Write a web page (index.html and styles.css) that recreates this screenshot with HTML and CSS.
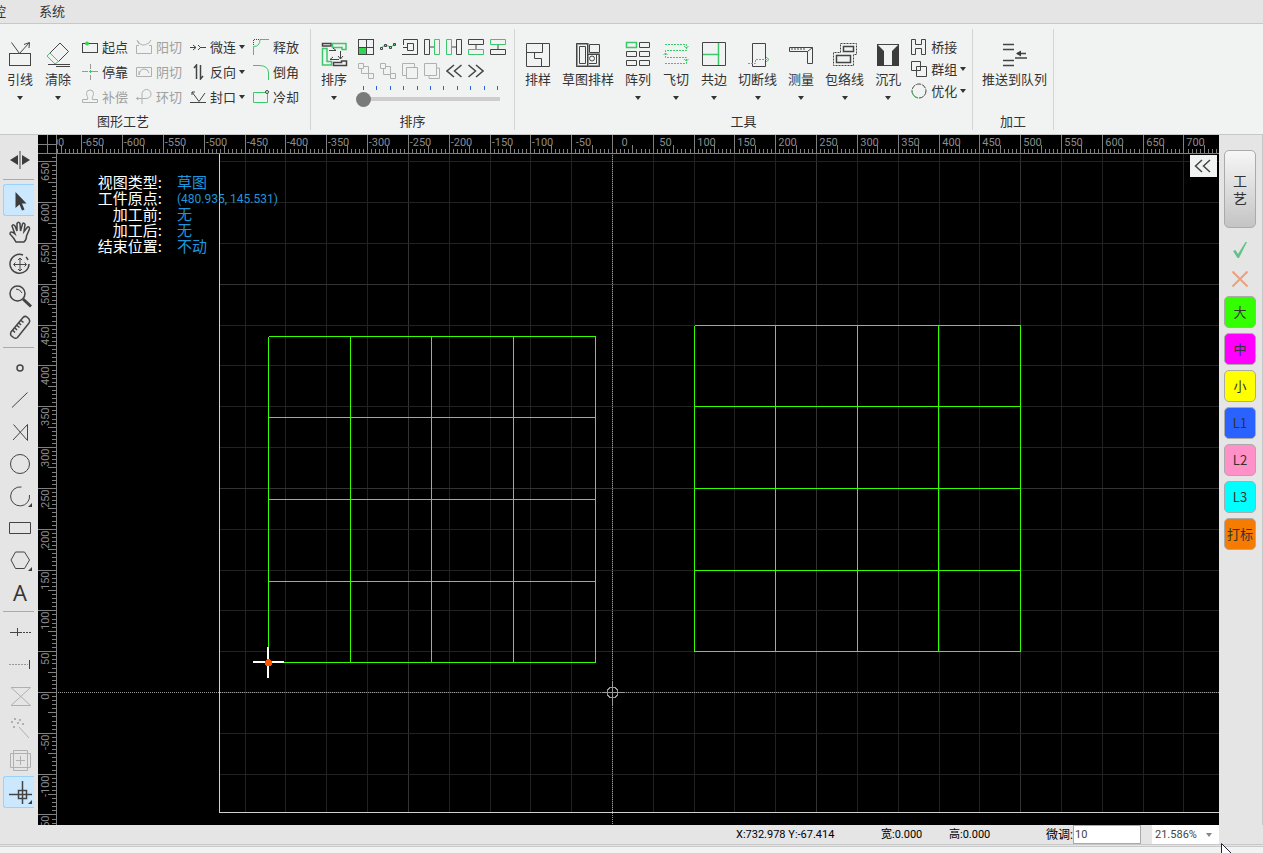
FILE: index.html
```
<!DOCTYPE html>
<html lang="zh-CN">
  <head>
    <meta charset="UTF-8" />
    <meta name="viewport" content="width=device-width, initial-scale=1.0" />
    <title>排样</title>
    <link rel="stylesheet" href="styles.css">
  </head>
  <body>
    <nav class="menu">
      <a href="#">监控</a>
      <a href="#">系统</a>
    </nav>

    <header class="ribbon">
      <section class="group first">
        <div class="tools">
          <button class="tool">
            <svg width="28" height="28"><rect x="3.5" y="13.5" width="21" height="12"/><path d="M5.5 2.5L13.5 13.5L23 3M18 4.5L23.5 2.5L23 8"/></svg>
            引线<i class="caret"></i>
          </button>
          <button class="tool">
            <svg width="28" height="28"><path d="M6 13L16 3L24.5 11.5L14.5 21.5"/><path class="g" d="M6 13L3 16L11 24L14.5 21.5Z"/><path d="M4 24.5H26M12 26.5H26"/></svg>
            清除<i class="caret"></i>
          </button>
          <div class="columns">
            <div class="column">
              <button class="small"><svg width="16" height="16"><rect x="0.5" y="4.5" width="15" height="9"/><circle class="gf" cx="5" cy="4.5" r="2"/></svg>起点</button>
              <button class="small"><svg width="16" height="16"><path class="soft" d="M0 7.5H6M10 7.5H16M8.500 0V5M8.500 11V16"/><path class="g" d="M7 7.500H10M8.500 6V9"/></svg>停靠</button>
              <button class="small" disabled><svg width="16" height="16"><path d="M.5 13.500V10.500H5.500C6.500 8 4.500 7 4.500 4.500A3.500 3.500 0 0 1 11.500 4.500C11.500 7 9.500 8 10.500 10.500H15.500V13.500Z"/></svg>补偿</button>
            </div>
            <div class="column">
              <button class="small" disabled><svg width="16" height="16"><path d="M.5 6.500V14.500H15.500V6.500H13M.5 6.500H3M2 2Q5 9 13 4L15 1M3 5L1 1"/></svg>阳切</button>
              <button class="small" disabled><svg width="16" height="16"><path d="M.5 3.500H15.500V12.500H.5ZM3 11Q4 5 8 5Q12 5 13 9M3 7L3 11"/></svg>阴切</button>
              <button class="small" disabled><svg width="16" height="16"><path d="M0 9.500H10Q15 9 15 5A4.500 4.500 0 0 0 6 5V15M1 8L3 9.500L1 11"/></svg>环切</button>
            </div>
            <div class="column">
              <button class="small"><svg width="16" height="16"><path d="M0 8.500H6M10 8.500H16M3 6L6 8.500L3 11M8 6L10.500 8.500L8 11"/></svg>微连<i class="caret"></i></button>
              <button class="small"><svg width="16" height="16"><path d="M6.500 15V1L4 4M10.500 1V15L13 12" stroke-width="1.500"/></svg>反向<i class="caret"></i></button>
              <button class="small"><svg width="16" height="16"><path d="M0 13.500H16M2 3L9 12.500L15 4M2 6V3H5"/></svg>封口<i class="caret"></i></button>
            </div>
            <div class="column">
              <button class="small"><svg width="16" height="16"><path class="g" d="M.5 16V7.500Q7 7.500 7 .5H16"/><path stroke-dasharray="1 1" d="M.5 6V.5H6"/></svg>释放</button>
              <button class="small"><svg width="16" height="16"><path class="g" d="M0 1.500H6Q15.500 1.500 15.500 9V16"/></svg>倒角</button>
              <button class="small"><svg width="16" height="16"><path class="g" d="M13 3.500H.5V13.500H14.500V5"/><circle cx="14" cy="3" r="1.500"/></svg>冷却</button>
            </div>
          </div>
        </div>
        <h2>图形工艺</h2>
      </section>

      <section class="group sort">
        <div class="tools">
          <button class="tool">
            <svg width="28" height="28"><path stroke-width="1.500" d="M2.500 3.500H11V6H2.500ZM21.500 21H26.500V25.500H13.500V22.500H21.500Z"/><path class="g" stroke-width="1.500" d="M12.500 3.500H26V9.500H22V7.500H12.500ZM2.500 8.500H7V21.500H11.500V25H2.500Z"/><path d="M9 10.500H16L13 8M20.500 11V19L18 16M20.500 19L23 16M19 19.500H10L13 17"/></svg>
            排序<i class="caret"></i>
          </button>
          <div class="sort-panel">
            <div class="icons">
              <button title="网格排序"><svg width="16" height="16"><rect x=".5" y=".5" width="15" height="15"/><rect class="gf" x="1" y="8" width="7" height="7"/><path d="M8.500 0V16M0 8.500H16"/></svg></button>
              <button title="最短路径"><svg width="16" height="16"><path class="g" d="M1 9L5 6L11 8L15 5"/><path d="M.5 8.500H2.500V10.500H.5ZM4.500 5.500H6.500V7.500H4.500ZM9.500 7.500H11.500V9.500H9.500ZM13.500 4.500H15.500V6.500H13.500Z"/></svg></button>
              <button title="由内到外"><svg width="16" height="16"><path d="M0 15.500H15.500V.5H1.500V6M1 8.500H5M5 4.500H11.500V11.500H5.500V4.500"/></svg></button>
              <button title="从左到右"><svg width="16" height="16"><path d="M.5 .5H5.500V15.500H.5ZM5 8H10"/><path class="g" d="M10.500 .5H15.500V15.500H10.500Z"/></svg></button>
              <button title="从右到左"><svg width="16" height="16"><path class="g" d="M.5 .5H5.500V15.500H.5Z"/><path d="M10.500 .5H15.500V15.500H10.500ZM6 8H11"/></svg></button>
              <button title="从上到下"><svg width="16" height="16"><path d="M.5 .5H15.500V5.500H.5ZM8 6V10"/><path class="g" d="M.5 10.500H15.500V15.500H.5Z"/></svg></button>
              <button title="从下到上"><svg width="16" height="16"><path class="g" d="M.5 .5H15.500V5.500H.5Z"/><path d="M.5 10.500H15.500V15.500H.5ZM8 6V10"/></svg></button>
              <button title="上移" disabled><svg width="16" height="16"><path d="M.5 .5H5.500V5.500H.5ZM3.500 6V10.500H10.500V3.500H6M10.500 10.500H15.500V15.500H10.500Z"/></svg></button>
              <button title="下移" disabled><svg width="16" height="16"><path d="M.5 .5H5.500V5.500H.5ZM6 3.500H10.500V10M3.500 6V11.500H10M10.500 10.500H15.500V15.500H10.500Z"/></svg></button>
              <button title="置顶" disabled><svg width="16" height="16"><path d="M4 12.500H.5V.5H12.500V4M4.500 4.500H15.500V15.500H4.500Z"/></svg></button>
              <button title="置底" disabled><svg width="16" height="16"><path d="M.5 .5H12.500V12.500H.5ZM13 5H15.500V15.500H5V13"/></svg></button>
              <button title="上一个"><svg width="16" height="16"><path stroke-width="1.500" d="M8 2L1 8L8 14M15.500 2L8.500 8L15.500 14"/></svg></button>
              <button title="下一个"><svg width="16" height="16"><path stroke-width="1.500" d="M.5 2L7.500 8L.5 14M8 2L15 8L8 14"/></svg></button>
            </div>
            <div class="ticks"><i></i><i></i><i></i><i></i><i></i><i></i><i></i><i></i><i></i><i></i><i></i></div>
            <input class="slider" type="range" min="0" max="10" value="0" aria-label="排序进度">
          </div>
        </div>
        <h2>排序</h2>
      </section>

      <section class="group kit">
        <div class="tools">
          <button class="tool"><svg width="28" height="28"><path d="M2.500 3.500H25.500V26.500H2.500ZM2 12.500H18.500V4M10.500 13V18.500H17.500V26"/></svg>排样</button>
          <button class="tool long"><svg width="28" height="28"><path class="soft" stroke-width="2" d="M3 4H14V26H3ZM14 14H25V26H14"/><path d="M2.500 3.500H13.500V26.500H2.500ZM13.500 14.500H25.500V26.500H13.500M5.500 6.500H11.500V23.500H5.500ZM15.500 4.500H25.500V12.500H15.500Z"/><circle cx="18" cy="18.500" r="2.500"/><path d="M15 23.500H22.500V15"/></svg>草图排样</button>
          <button class="tool"><svg width="28" height="28"><path class="g" d="M2.500 2.500H12.500V7.500H2.500Z" stroke-width="1.500"/><path d="M15.500 2.500H25.500V7.500H15.500ZM2.500 11.500H12.500V16.500H2.500ZM15.500 11.500H25.500V16.500H15.500ZM2.500 20.500H12.500V25.500H2.500ZM15.500 20.500H25.500V25.500H15.500Z"/></svg>阵列<i class="caret"></i></button>
          <button class="tool"><svg width="28" height="28"><g class="g"><path stroke-dasharray="2 1" d="M3 4.500H24.500V10.500H3.500V17.500H24.500V23.500H3"/><path d="M22 6L24.500 8L26.500 6M1.500 15L3.500 13L5.500 15M22 19L24.500 21L26.500 19"/></g></svg>飞切<i class="caret"></i></button>
          <button class="tool"><svg width="28" height="28"><path d="M2.500 2.500H25.500V25.500H2.500Z"/><path class="g" stroke-width="1.500" d="M18.500 3V25M3 14.500H18"/></svg>共边<i class="caret"></i></button>
          <button class="tool long"><svg width="28" height="28"><path d="M8.500 3.500H21.500V26.500H8.500Z"/><path class="g" stroke-dasharray="2 1" d="M4 23.500H11.500V19.500H24"/><path class="g" d="M22 17L25 19.500L22 22"/></svg>切断线<i class="caret"></i></button>
          <button class="tool"><svg width="28" height="28"><path d="M2.500 7.500H25.500V23.500H20.500V11.500H2.500ZM25.500 7.500L20.500 11.500M5 8V10M8 8V10M11 8V10M14 8V10M17 8V10"/></svg>测量<i class="caret"></i></button>
          <button class="tool long"><svg width="28" height="28"><path stroke-dasharray="2 1" d="M9.500 12.500V3.500H25.500V14.500H22.500V25.500H2.500V12.500H9.500"/><path stroke-width="1.500" d="M12.500 6.500H22.500V11.500H12.500ZM5.500 15.500H19.500V22.500H5.500Z"/></svg>包络线<i class="caret"></i></button>
          <button class="tool"><svg width="28" height="28"><path class="solid" d="M3 4L10 11V26H3ZM25 4L18 11V26H25Z"/><path d="M3 4.500H25M10 25.500H18"/></svg>沉孔<i class="caret"></i></button>
          <div class="column tight">
            <button class="small"><svg width="16" height="16"><path d="M.5 .5H4.500V5.500H10.500V.5H14.500V15.500H10.500V9.500H4.500V15.500H.5Z"/></svg>桥接</button>
            <button class="small"><svg width="16" height="16"><path d="M.5 .5H9.500V9.500H.5ZM5.500 5.500H15.500V15.500H5.500Z"/></svg>群组<i class="caret"></i></button>
            <button class="small"><svg width="16" height="16"><circle cx="8" cy="8" r="7" stroke-dasharray="5 1"/><path class="g" d="M1 9Q2 14 7 15"/></svg>优化<i class="caret"></i></button>
          </div>
        </div>
        <h2>工具</h2>
      </section>

      <section class="group queue">
        <div class="tools">
          <button class="tool long"><svg width="28" height="28"><path stroke-width="1.500" d="M2 4.500H13M2 9.500H13M2 20.500H13M2 25.500H13M14 18H26M25 13.500H16"/><path class="solid" d="M15 13.500L20 10.500V16.500Z"/></svg>推送到队列</button>
        </div>
        <h2>加工</h2>
      </section>
    </header>

    <main>
      <aside class="left-bar">
        <button title="镜像"><svg width="32" height="32"><path class="solid" d="M7 16L15 11V21ZM27 16L19 11V21Z"/><path d="M17 7V25"/></svg></button>
        <hr>
        <button title="选择" class="active"><svg width="32" height="32"><path class="solid" d="M12.500 8V24L16.500 20.500L19 26.500L21.500 25.500L19 19.500H23.500Z"/></svg></button>
        <button title="平移"><svg width="32" height="32"><path stroke-width="1.500" d="M13 26Q11 22 7 18Q7 15 10 16.500L12 18L9 10Q10 7.500 12 10L14 15L14 7.500Q15.500 5 17 7.500L17.500 15L19.500 8Q21 6 22 8.500L21 15.500L24.500 11Q26.500 10 26.500 13L23.500 20Q23.500 24 21 26Z"/></svg></button>
        <button title="旋转"><svg width="32" height="32"><path stroke-width="1.500" d="M20 7A9.500 9.500 0 1 0 26 16M25 12A9.500 9.500 0 0 0 23 9"/><path d="M17 10.500V22M11 16.500H23M15 12L17 10L19 12M15 21L17 23L19 21M12.500 14.500L10.500 16.500L12.500 18.500M21.500 14.500L23.500 16.500L21.500 18.500"/></svg></button>
        <button title="缩放"><svg width="32" height="32"><circle cx="14.500" cy="13.500" r="7.500" stroke-width="1.500"/><path d="M13 9Q17 9 19 13"/><path stroke-width="3" d="M20 19L28 26.500"/></svg></button>
        <button title="测量"><svg width="32" height="32"><path stroke-width="1.500" d="M20 5.500Q22 3.500 24 5L26 7Q27.500 9 26 11L14.500 25.500Q12.500 27 10.500 25.500L8 23.500Q7 22 8 20ZM18 8.500L20.500 10.500M16 11L18 13M14 13.500L16.500 15.500M12 16L14 18M10 18.500L12 20.500"/></svg></button>
        <hr>
        <button title="点"><svg width="32" height="32"><circle cx="17" cy="16" r="3" stroke-width="1.500"/></svg></button>
        <button title="直线"><svg width="32" height="32"><path d="M9 23.500L24.500 8.500"/></svg></button>
        <button title="折线"><svg width="32" height="32"><path d="M10.500 8.500L24.500 24.500V8.500L10 24"/></svg></button>
        <button title="圆"><svg width="32" height="32"><circle cx="17" cy="16" r="9.500"/></svg></button>
        <button title="圆弧"><svg width="32" height="32"><path d="M18.500 7A9.500 9.500 0 1 0 26.500 15"/><path class="solid" d="M29 23V27H25Z"/></svg></button>
        <button title="矩形"><svg width="32" height="32"><path d="M6.500 10.500H27.500V21.500H6.500Z"/></svg></button>
        <button title="多边形"><svg width="32" height="32"><path d="M8 16L12.500 8H21.500L26.500 16L21.500 24.500H12.500Z"/><path class="solid" d="M29 23V27H25Z"/></svg></button>
        <button title="文字" class="letter">A</button>
        <hr>
        <button title="打断"><svg width="32" height="32"><path d="M7 16.500H17M14.500 12V20"/><path stroke-dasharray="2 1" d="M17 16.500H28"/></svg></button>
        <button title="延伸"><svg width="32" height="32"><path class="soft" stroke-dasharray="2 1" d="M6 16.500H25"/><path d="M26.500 12V21"/></svg></button>
        <button title="镜像复制" disabled><svg width="32" height="32"><path d="M8 7.500H27.500L8 25.500H27.500Z"/></svg></button>
        <button title="炸开" disabled><svg width="32" height="32"><path d="M16 15L26 26"/><path stroke-width="2" d="M8 10H10M11 7H13M16 8H18M19 12H21M10 15H12M14 11H16"/></svg></button>
        <button title="阵列" disabled><svg width="32" height="32"><path d="M10.500 6.500H24.500V26.500H10.500ZM7.500 9.500H27.500V23.500H7.500ZM17.500 12V21M13 16.500H22"/></svg></button>
        <button title="捕捉" class="active"><svg width="32" height="32"><path stroke-width="1.500" d="M6 18.500H29M19.500 5V28M15.500 14.500H23.500V22.500H15.500Z"/><path class="solid" d="M29 24V28H25Z"/></svg></button>
      </aside>

      <div class="stage">
        <svg id="drawing" class="drawing"></svg>
        <dl class="info">
          <dt>视图类型:</dt><dd>草图</dd>
          <dt>工件原点:</dt><dd class="number">(480.935, 145.531)</dd>
          <dt>加工前:</dt><dd>无</dd>
          <dt>加工后:</dt><dd>无</dd>
          <dt>结束位置:</dt><dd>不动</dd>
        </dl>
        <button class="collapse" title="展开"><svg width="18" height="16"><path stroke-width="1.500" d="M8 2L1.500 8L8 14M16 2L9.500 8L16 14"/></svg></button>
      </div>

      <aside class="right-bar">
        <button class="craft">工<br>艺</button>
        <div class="confirm">
          <button title="确定"><svg width="18" height="18"><path class="yes" d="M2 10L4.500 9L7 13L14.500 1H16L8 17H6.500Z"/></svg></button>
          <button title="取消"><svg width="18" height="18"><path class="no" d="M1.500 1.500L16.500 16.500M16.500 1.500L1.500 16.500"/></svg></button>
        </div>
        <div class="layers">
          <button class="lime">大</button>
          <button class="magenta">中</button>
          <button class="yellow">小</button>
          <button class="blue">L1</button>
          <button class="pink">L2</button>
          <button class="cyan">L3</button>
          <button class="orange">打标</button>
        </div>
      </aside>
    </main>

    <footer class="status">
      <span class="position">X:732.978 Y:-67.414</span>
      <span class="size">宽:0.000</span>
      <span class="size">高:0.000</span>
      <label for="nudge">微调:</label>
      <input id="nudge" type="text" value="10">
      <div class="zoom">
        <select aria-label="缩放比例"><option>21.586%</option></select>
        <i class="caret"></i>
      </div>
      <svg class="pointer" width="16" height="22"><path d="M.5 .5V18L5 14L8 21L11 20L8 13H13Z"/></svg>
    </footer>

    <script src="script.js"></script>
  </body>
</html>
```
FILE: styles.css
```
* {
  box-sizing: border-box;
}
body {
  margin: 0;
  height: 100vh;
  display: flex;
  flex-direction: column;
  overflow: hidden;
  background: #e5e5e5;
  color: #333;
  font-family: "Noto Sans CJK SC", sans-serif;
  font-size: 13px;
  line-height: 20px;
}
button {
  margin: 0;
  padding: 0;
  border: none;
  background: none;
  color: inherit;
  font: inherit;
  white-space: nowrap;
}
svg {
  display: block;
  flex: none;
  fill: none;
  stroke: #444;
}
.g {
  stroke: #3cc76a;
}
.gf {
  fill: #35d352;
  stroke: none;
}
.soft {
  stroke: #999;
}
.solid {
  fill: #3c3c3c;
  stroke: none;
}
button:disabled {
  color: #a0a0a0;
}
button:disabled svg {
  stroke: #b0b0b0;
}
.caret {
  border: 3px solid transparent;
  border-top: 4px solid #333;
  border-bottom: none;
}

/* menu */
.menu {
  display: flex;
  gap: 33px;
  height: 24px;
  margin-left: -20px;
  border-bottom: 1px solid #c8c8c8;
  flex: none;
}
.menu a {
  color: #333;
  text-decoration: none;
  line-height: 21px;
}

/* ribbon */
.ribbon {
  display: flex;
  flex: none;
  height: 111px;
  padding: 5px 0 4px;
  background: #f1f3f2;
  border-bottom: 1px solid #c8c8c8;
}
.group {
  display: flex;
  flex-direction: column;
  justify-content: space-between;
  border-right: 1px solid #d4d4d4;
}
.group h2 {
  margin: 0 0 0 -4px;
  font-size: 13px;
  font-weight: normal;
  line-height: 18px;
  text-align: center;
}
.tools {
  display: flex;
}
.first {
  width: 375px;
  margin-left: -64px;
  padding-left: 65px;
}
.first h2 {
  margin-left: -65px;
}
.sort {
  width: 204px;
  padding-left: 4px;
}
.kit {
  width: 458px;
  padding-left: 4px;
}
.queue {
  width: 81px;
  padding-left: 4px;
}
.tool {
  display: flex;
  flex-direction: column;
  align-items: center;
  padding: 11px 6px 0;
}
.tool.long {
  padding: 11px 5px 0;
}
.tool svg {
  margin: 0 -1px 1px;
}
.tool .caret {
  margin-top: 7px;
}
.columns {
  display: flex;
  gap: 8px;
  padding: 5px 0 0 5px;
}
.small {
  display: flex;
  align-items: center;
  gap: 4px;
  height: 25px;
}
.small .caret {
  margin-left: -1px;
}
.tight {
  padding: 7px 0 0 4px;
}
.tight .small {
  height: 22px;
}
.sort-panel {
  padding: 9px 0 0 4px;
}
.icons {
  display: grid;
  grid-template-columns: repeat(7, 22px);
}
.icons button {
  height: 24px;
  padding: 1px;
  display: flex;
}
.ticks {
  display: flex;
  justify-content: space-between;
  width: 137px;
  padding: 0 1px;
  margin-left: 5px;
}
.ticks i {
  width: 1px;
  height: 4px;
  background: #2864d8;
}
.slider {
  appearance: none;
  display: block;
  width: 144px;
  height: 16px;
  margin: 1px 0 0 -1px;
  background: linear-gradient(#cfcccc, #cfcccc) 8px 6px / 100% 4px no-repeat;
}
.slider::-webkit-slider-thumb {
  appearance: none;
  width: 15px;
  height: 15px;
  border-radius: 50%;
  background: #7a7a7a;
}

/* work area */
main {
  display: flex;
  flex: 1;
  min-height: 0;
}
.left-bar {
  width: 38px;
  flex: none;
  padding: 9px 4px 0 3px;
}
.left-bar button {
  display: block;
  width: 31px;
  height: 32px;
}
.left-bar .active {
  background: #cce8ff;
  border: 1px solid #99d1ff;
  border-right: none;
  border-radius: 3px 0 0 3px;
}
.left-bar .active svg {
  margin: -1px;
}
.left-bar hr {
  height: 1px;
  margin: 3px 0 4px;
  border: none;
  background: #aaa;
}
.left-bar .letter {
  padding-left: 3px;
  font: 22px/30px "Open Sans", sans-serif;
}
.stage {
  position: relative;
  flex: 1;
  overflow: hidden;
  background: #000;
}
.drawing {
  width: 100%;
  height: 100%;
  shape-rendering: crispEdges;
}
.drawing .grid {
  stroke: #222;
}
.drawing .grid-bold {
  stroke: #333;
}
.drawing .sheet {
  stroke: #d0d0d0;
}
.drawing .axis {
  stroke: #999;
  stroke-dasharray: 1 1;
}
.drawing .part {
  stroke: #3f0;
}
.drawing .ruler {
  fill: #000;
  stroke: none;
}
.drawing .tick {
  stroke: #808080;
}
.drawing text {
  fill: #8c8c8c;
  stroke: none;
  font: 11px Roboto, sans-serif;
}
.drawing .origin {
  stroke: #999;
}
.drawing .cross {
  stroke: #fff;
  stroke-width: 2px;
}
.drawing .handle {
  fill: #f50;
  stroke: none;
}
.info {
  position: absolute;
  left: 54px;
  top: 39px;
  display: grid;
  grid-template-columns: 70px auto;
  column-gap: 15px;
  margin: 0;
  font-size: 15px;
  line-height: 16px;
  white-space: nowrap;
}
.info dt {
  color: #fff;
  text-align: right;
}
.info dd {
  margin: 0;
  color: #1e96dc;
}
.info .number {
  font: 12px/18px Roboto, sans-serif;
  height: 16px;
}
.collapse {
  position: absolute;
  right: 2px;
  top: 20px;
  width: 27px;
  height: 22px;
  padding: 0 4px;
  background: #f1f3f2;
}
.right-bar {
  flex: none;
  width: 44px;
  padding: 15px 7px 0 5px;
  border-right: 1px solid #c8c8c8;
}
.right-bar button {
  display: block;
  width: 32px;
}
.right-bar .craft {
  height: 78px;
  border: 1px solid #aaa;
  border-radius: 5px;
  background: linear-gradient(#f6f6f6, #c4c4c4);
  font-size: 14px;
  line-height: 18px;
}
.confirm {
  padding: 7px 0 3px;
}
.confirm button {
  height: 29px;
  padding: 5px 7px;
}
.yes {
  fill: #62c389;
  stroke: none;
}
.no {
  stroke: #eda07c;
  stroke-width: 2px;
}
.layers {
  display: flex;
  flex-direction: column;
  gap: 5px;
}
.layers button {
  height: 32px;
  border: 1px solid #aaa;
  border-radius: 5px;
}
.lime {
  background: #3f0;
}
.magenta {
  background: #f0f;
}
.yellow {
  background: #ff0;
}
.blue {
  background: #2962ff;
}
.pink {
  background: #ff91c8;
}
.cyan {
  background: #0ff;
}
.orange {
  background: #f57c00;
}

/* status bar */
.status {
  position: relative;
  flex: none;
  display: flex;
  justify-content: flex-end;
  height: 28px;
  padding-right: 44px;
  background: linear-gradient(#e5e5e5 19px, #c8c8c8 19px, #c8c8c8 20px, #e5e5e5 20px, #e5e5e5 21px, #c8c8c8 21px, #c8c8c8 22px, #f1f3f2 22px);
  color: #000;
  font: 11px/20px Roboto, "Noto Sans CJK SC", sans-serif;
}
.position {
  width: 145px;
}
.size {
  width: 68px;
}
.status label {
  width: 56px;
  font-size: 12px;
  text-align: right;
}
.status input {
  width: 68px;
  height: 19px;
  padding: 0 1px;
  border: 1px solid #aaa;
  background: #fff;
  color: #444;
  font: inherit;
}
.zoom {
  display: flex;
  align-items: center;
  width: 67px;
  height: 19px;
  margin-left: 11px;
  padding-right: 7px;
  background: #fff;
}
.zoom select {
  appearance: none;
  flex: 1;
  min-width: 0;
  padding: 0 3px;
  border: none;
  background: none;
  color: #444;
  font: inherit;
}
.zoom .caret {
  border-top-color: #888;
}
.pointer {
  position: absolute;
  right: 26px;
  top: 18px;
  fill: #fff;
  stroke: #223;
}
```
FILE: script.js
```
const svg = document.getElementById("drawing");
const scale = 0.8164;
const origin = { x: 574, y: 557 };
const rulerSize = 18;
const sheet = { x: 181, y: 677 };

function add(name, attrs, text) {
  const el = document.createElementNS("http://www.w3.org/2000/svg", name);
  for (const key in attrs) {
    el.setAttribute(key, attrs[key]);
  }
  if (text !== undefined) {
    el.textContent = text;
  }
  svg.appendChild(el);
}

function line(x1, y1, x2, y2, cls) {
  add("path", { d: `M${x1} ${y1}L${x2} ${y2}`, class: cls });
}

// half pixel keeps 1px lines sharp
function px(value) {
  return origin.x + Math.round(value * scale) + 0.5;
}
function py(value) {
  return origin.y - Math.round(value * scale) + 0.5;
}

function drawPart(left, bottom) {
  for (let i = 0; i <= 4; i++) {
    line(px(left + i * 100), py(bottom), px(left + i * 100), py(bottom + 400), "part");
    line(px(left), py(bottom + i * 100), px(left + 400), py(bottom + i * 100), "part");
  }
}

function draw() {
  const width = svg.clientWidth;
  const height = svg.clientHeight;
  svg.innerHTML = "";

  const minX = Math.floor(-origin.x / scale / 50) * 50;
  const maxX = (width - origin.x) / scale;
  const minY = Math.floor((origin.y - height) / scale / 50) * 50;
  const maxY = origin.y / scale;

  for (let v = minX; v <= maxX; v += 50) {
    if (px(v) > sheet.x) {
      line(px(v), 0, px(v), sheet.y, v % 250 ? "grid" : "grid-bold");
    }
  }
  for (let v = minY; v <= maxY; v += 50) {
    if (py(v) < sheet.y) {
      line(sheet.x, py(v), width, py(v), v % 250 ? "grid" : "grid-bold");
    }
  }
  line(sheet.x + 0.5, 0, sheet.x + 0.5, sheet.y, "sheet");
  line(sheet.x, sheet.y + 0.5, width, sheet.y + 0.5, "sheet");
  line(px(0), 0, px(0), height, "axis");
  line(0, py(0), width, py(0), "axis");

  drawPart(-421.3, 36.5);
  drawPart(99.9, 50);

  add("circle", { cx: px(0), cy: py(0), r: 5.5, class: "origin" });
  line(px(0) - 11, py(0), px(0) + 12, py(0), "origin");
  line(px(0), py(0) - 11, px(0), py(0) + 12, "origin");

  const hx = px(-421.3) - 0.5;
  const hy = py(36.5) - 0.5;
  line(hx - 15, hy, hx + 16, hy, "cross");
  line(hx, hy - 15, hx, hy + 16, "cross");
  add("circle", { cx: hx + 0.5, cy: hy + 0.5, r: 3.5, class: "handle" });

  // top ruler
  add("rect", { x: 0, y: 0, width: width, height: rulerSize, class: "ruler" });
  for (let v = minX; v <= maxX; v += 5) {
    const size = v % 50 === 0 ? 18 : v % 25 === 0 ? 8 : 4;
    line(px(v), rulerSize - size, px(v), rulerSize, "tick");
    if (v % 50 === 0) {
      add("text", { "text-anchor": "middle", x: px(v) + 12, y: 11 }, v);
    }
  }
  // left ruler
  add("rect", { x: 0, y: 0, width: rulerSize, height: height, class: "ruler" });
  for (let v = minY; v <= maxY; v += 5) {
    const size = v % 50 === 0 ? 18 : v % 25 === 0 ? 8 : 4;
    line(rulerSize - size, py(v), rulerSize, py(v), "tick");
    if (v % 50 === 0) {
      add("text", { "text-anchor": "end", transform: `translate(11 ${py(v) + 1}) rotate(-90)` }, v);
    }
  }
  add("rect", { x: 0, y: 0, width: rulerSize, height: rulerSize, class: "ruler" });
  line(9.5, 0, 9.5, rulerSize, "tick");
  line(0, 9.5, rulerSize, 9.5, "tick");
  line(0, rulerSize + 0.5, width, rulerSize + 0.5, "tick");
  line(rulerSize + 0.5, 0, rulerSize + 0.5, height, "tick");
}

draw();
window.addEventListener("resize", draw);
```
